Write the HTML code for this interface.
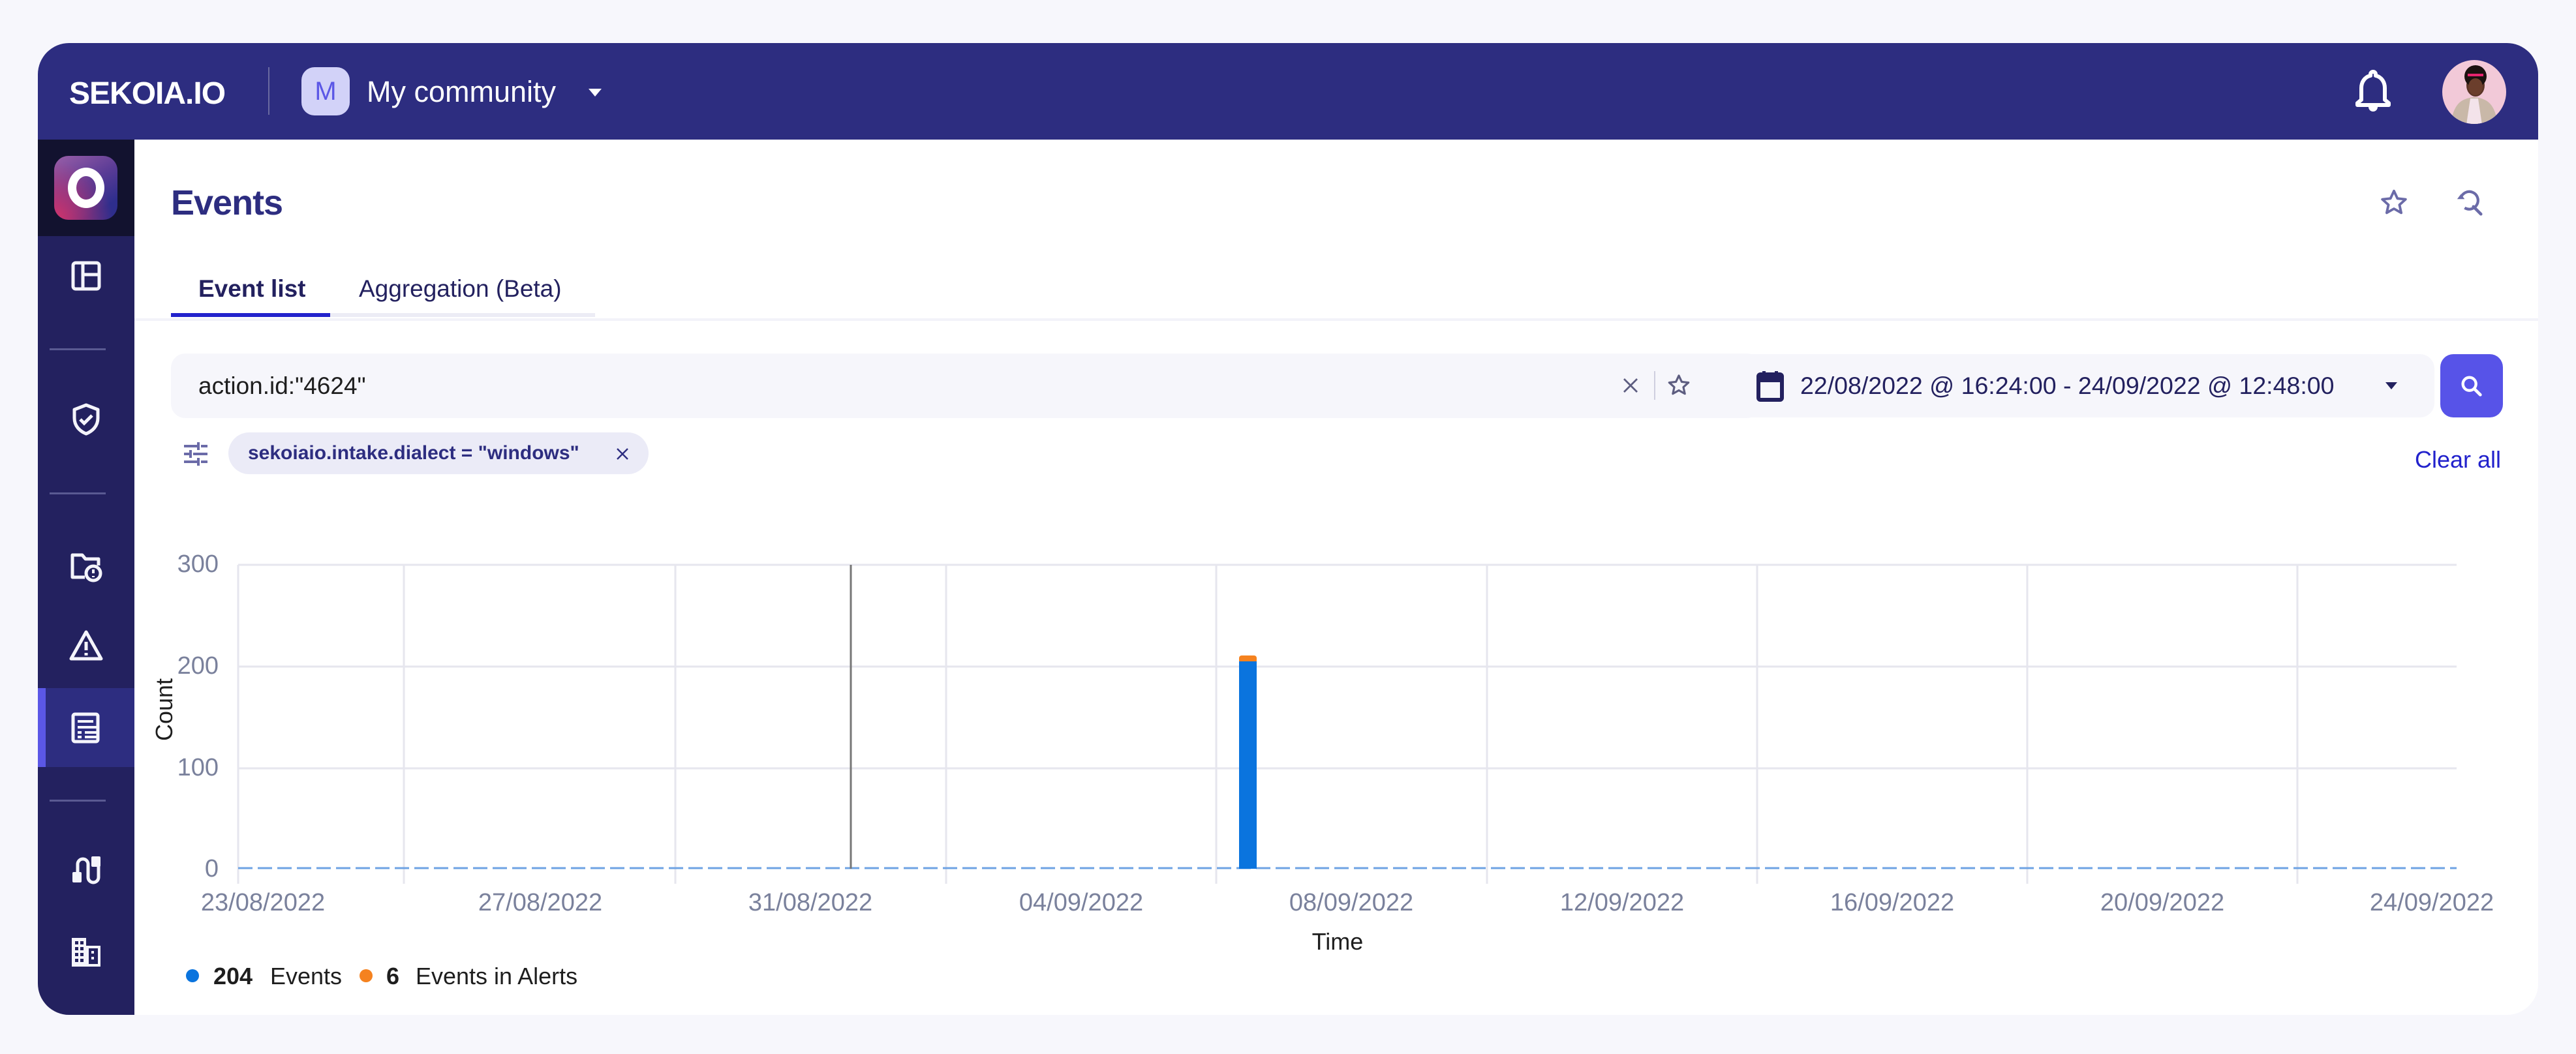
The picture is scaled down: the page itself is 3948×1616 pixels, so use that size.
<!DOCTYPE html>
<html><head><meta charset="utf-8"><style>
*{margin:0;padding:0;box-sizing:border-box}
body{width:3948px;height:1616px;background:#f7f7fc;font-family:"Liberation Sans",sans-serif;position:relative;overflow:hidden}
.a{position:absolute}
.frame{left:58px;top:66px;width:3832px;height:1490px;border-radius:48px;overflow:hidden;background:#fff}
.hdr{left:0;top:0;width:3832px;height:148px;background:#2d2d80}
.side{left:0;top:148px;width:148px;height:1342px;background:#23215f}
.sep{left:18px;width:86px;height:3px;background:#5a5a92}
.ic{left:48px;width:52px;height:52px}
</style></head><body>
<div class="a frame">
 <div class="a hdr">
  <div class="a" style="left:48px;top:50px;font-size:48px;font-weight:bold;color:#fff;letter-spacing:-1px">SEKOIA.IO</div>
  <div class="a" style="left:353px;top:37px;width:2px;height:73px;background:#6a6aa0"></div>
  <div class="a" style="left:404px;top:37px;width:74px;height:74px;border-radius:20px;background:#d2d2f8;color:#5b57e6;font-size:40px;text-align:center;line-height:74px">M</div>
  <div class="a" style="left:504px;top:49px;font-size:45px;color:#fff">My community</div>
  <svg class="a" style="left:842px;top:68px" width="24" height="16"><path d="M2 2h20L12 14z" fill="#fff"/></svg>
  <svg class="a" style="left:3550px;top:40px" width="58" height="66" viewBox="0 0 58 66"><path d="M29 4a4 4 0 014 4v2c9 2 14 10 14 19v18l6 5v3H5v-3l6-5V29c0-9 5-17 14-19V8a4 4 0 014-4z" fill="none" stroke="#fff" stroke-width="6" stroke-linejoin="round"/><path d="M22 58h14a7 7 0 01-14 0z" fill="#fff"/></svg>
  <svg class="a" style="left:3684px;top:25px" width="100" height="100" viewBox="0 0 100 100"><defs><clipPath id="c"><circle cx="50" cy="50" r="49"/></clipPath></defs><circle cx="50" cy="50" r="49" fill="#f2c9d8"/><g clip-path="url(#c)"><path d="M14 100c4-30 14-40 36-42 22 2 32 12 36 42z" fill="#c9b8a8"/><path d="M38 100l6-40h12l6 40z" fill="#f3e3ea"/><ellipse cx="52" cy="40" rx="14" ry="17" fill="#5a3426"/><circle cx="52" cy="26" r="17" fill="#1b1210"/><ellipse cx="52" cy="42" rx="11" ry="13" fill="#6b3e2c"/><path d="M40 24h24" stroke="#e5246e" stroke-width="4"/></g></svg>
 </div>
 <div class="a side">
  <div class="a" style="left:0;top:0;width:148px;height:148px;background:#12122f"></div>
  <div class="a" style="left:25px;top:25px;width:97px;height:98px;border-radius:22px;background:linear-gradient(150deg,#9b5fa8 0%,#5b3c96 45%,#2e2e8c 80%);overflow:hidden">
   <div class="a" style="left:0;top:0;width:97px;height:98px;background:radial-gradient(circle at 0% 100%,#d6336a 0%,rgba(214,51,106,0.5) 35%,rgba(214,51,106,0) 65%)"></div>
   <div class="a" style="left:21px;top:18px;width:56px;height:62px;border:13px solid #fff;border-radius:50%"></div>
  </div>
  <svg class="a ic" style="top:183px" viewBox="0 0 52 52"><rect x="6" y="6" width="40" height="40" rx="4" fill="none" stroke="#f4f4fb" stroke-width="5"/><path d="M21 6v40M21 24h25" stroke="#f4f4fb" stroke-width="5"/></svg>
  <div class="a sep" style="top:320px"></div>
  <svg class="a ic" style="top:403px" viewBox="0 0 52 52"><path d="M26 4l18 7v13c0 12-8 20-18 24C16 44 8 36 8 24V11z" fill="none" stroke="#f4f4fb" stroke-width="5" stroke-linejoin="round"/><path d="M17 26l6 6 12-12" fill="none" stroke="#f4f4fb" stroke-width="5"/></svg>
  <div class="a sep" style="top:541px"></div>
  <svg class="a ic" style="top:629px" viewBox="0 0 52 52"><path d="M24 42H5V8h15l5 6h20v10" fill="none" stroke="#f4f4fb" stroke-width="5" stroke-linejoin="round"/><circle cx="37" cy="36" r="11" fill="none" stroke="#f4f4fb" stroke-width="5"/><path d="M37 30v6M37 40v2" stroke="#f4f4fb" stroke-width="4"/></svg>
  <svg class="a ic" style="top:750px" viewBox="0 0 52 52"><path d="M26 5L3 46h46z" fill="none" stroke="#f4f4fb" stroke-width="5" stroke-linejoin="round"/><path d="M26 20v13M26 37v4" stroke="#f4f4fb" stroke-width="5"/></svg>
  <div class="a" style="left:0;top:841px;width:148px;height:121px;background:#2d2d80"></div>
  <div class="a" style="left:0;top:841px;width:12px;height:121px;background:#5b57e6"></div>
  <svg class="a ic" style="top:876px" viewBox="0 0 52 52"><rect x="6" y="5" width="38" height="42" rx="3" fill="none" stroke="#f4f4fb" stroke-width="5"/><path d="M13 16h24M13 25h32M13 33h6M24 33h22M13 40h6M24 40h22" stroke="#f4f4fb" stroke-width="4"/></svg>
  <div class="a sep" style="top:1012px"></div>
  <svg class="a ic" style="top:1095px" viewBox="0 0 52 52"><path d="M13 36V16a8 8 0 0116 0v20a8 8 0 0016 0V18" fill="none" stroke="#f4f4fb" stroke-width="5"/><rect x="5" y="28" width="14" height="16" rx="2" fill="#f4f4fb"/><rect x="34" y="4" width="14" height="16" rx="2" fill="#f4f4fb"/></svg>
  <svg class="a ic" style="top:1220px" viewBox="0 0 52 52"><path d="M4 4h22v12h22v32H4z" fill="#f4f4fb"/><g fill="#23215f"><rect x="9" y="9" width="5" height="5"/><rect x="17" y="9" width="5" height="5"/><rect x="9" y="18" width="5" height="5"/><rect x="17" y="18" width="5" height="5"/><rect x="9" y="27" width="5" height="5"/><rect x="17" y="27" width="5" height="5"/><rect x="9" y="36" width="5" height="5"/><rect x="17" y="36" width="5" height="5"/><rect x="30" y="20" width="14" height="24"/></g><rect x="34" y="24" width="4" height="4" fill="#f4f4fb"/><rect x="34" y="33" width="4" height="4" fill="#f4f4fb"/></svg>
 </div>
 <!-- content -->
 <div class="a" style="left:204px;top:214px;font-size:54px;font-weight:bold;color:#2d2d80;letter-spacing:-1px">Events</div>
 <svg class="a" style="left:3588px;top:222px" width="46" height="46" viewBox="0 0 24 24"><path d="M12 2.5l2.8 6 6.5.7-4.9 4.4 1.4 6.4L12 16.7 6.2 20l1.4-6.4L2.7 9.2l6.5-.7z" fill="none" stroke="#6b6ba8" stroke-width="2" stroke-linejoin="round"/></svg>
 <svg class="a" style="left:3704px;top:222px" width="46" height="46" viewBox="0 0 24 24"><path d="M5 8a7 7 0 113 8" fill="none" stroke="#6b6ba8" stroke-width="2.2"/><path d="M2 9l3-4 3 4z" fill="#6b6ba8"/><path d="M15 15l6 6" stroke="#6b6ba8" stroke-width="2.4" stroke-linecap="round"/></svg>
 <div class="a" style="left:246px;top:356px;font-size:37px;font-weight:bold;color:#23215f">Event list</div>
 <div class="a" style="left:492px;top:356px;font-size:37px;color:#23215f">Aggregation (Beta)</div>
 <div class="a" style="left:204px;top:414px;width:650px;height:6px;background:#ececf5"></div>
 <div class="a" style="left:204px;top:414px;width:244px;height:6px;background:#2222cc"></div>
 <div class="a" style="left:148px;top:422px;width:3684px;height:4px;background:#f3f3f9"></div>
 <div class="a" style="left:204px;top:476px;width:2437px;height:99px;border-radius:22px;background:#f6f6fb"></div>
 <div class="a" style="left:246px;top:505px;font-size:37px;color:#1e1e1e">action.id:"4624"</div>
 <svg class="a" style="left:2426px;top:510px" width="30" height="30" viewBox="0 0 24 24"><path d="M4 4l16 16M20 4L4 20" stroke="#5d5d80" stroke-width="2.2"/></svg>
 <div class="a" style="left:2477px;top:503px;width:2px;height:44px;background:#cfcfdf"></div>
 <svg class="a" style="left:2496px;top:506px" width="38" height="38" viewBox="0 0 24 24"><path d="M12 2.5l2.8 6 6.5.7-4.9 4.4 1.4 6.4L12 16.7 6.2 20l1.4-6.4L2.7 9.2l6.5-.7z" fill="none" stroke="#5d5d80" stroke-width="2" stroke-linejoin="round"/></svg>
 <div class="a" style="left:2595px;top:477px;width:1078px;height:97px;border-radius:22px;background:#f6f6fb"></div>
 <svg class="a" style="left:2634px;top:502px" width="42" height="48" viewBox="0 0 42 48"><rect x="3" y="6" width="36" height="39" rx="3" fill="none" stroke="#23215f" stroke-width="6"/><rect x="3" y="6" width="36" height="12" fill="#23215f"/><rect x="9" y="1" width="5" height="8" fill="#23215f"/><rect x="28" y="1" width="5" height="8" fill="#23215f"/></svg>
 <div class="a" style="left:2701px;top:504px;font-size:37.5px;color:#23215f">22/08/2022 @ 16:24:00 - 24/09/2022 @ 12:48:00</div>
 <svg class="a" style="left:3596px;top:518px" width="22" height="16"><path d="M2 2h18L11 13z" fill="#23215f"/></svg>
 <div class="a" style="left:3682px;top:477px;width:96px;height:97px;border-radius:20px;background:#5753e8"></div>
 <svg class="a" style="left:3710px;top:506px" width="40" height="40" viewBox="0 0 24 24"><circle cx="10" cy="10" r="6" fill="none" stroke="#fff" stroke-width="2.6"/><path d="M14.5 14.5l5.5 5.5" stroke="#fff" stroke-width="2.8" stroke-linecap="round"/></svg>
 <svg class="a" style="left:222px;top:610px" width="40" height="40" viewBox="0 0 40 40"><g stroke="#6b6ba8" stroke-width="4"><path d="M2 8h20M28 8h10M24 2v12M2 20h8M16 20h22M12 14v12M2 32h20M28 32h10M24 26v12"/></g></svg>
 <div class="a" style="left:292px;top:597px;width:644px;height:64px;border-radius:32px;background:#ebebf7"></div>
 <div class="a" style="left:322px;top:612px;font-size:30px;font-weight:bold;color:#2d2d80">sekoiaio.intake.dialect = "windows"</div>
 <svg class="a" style="left:884px;top:618px" width="24" height="24" viewBox="0 0 24 24"><path d="M4 4l16 16M20 4L4 20" stroke="#2d2d80" stroke-width="2.4"/></svg>
 <div class="a" style="right:57px;top:618px;font-size:36px;color:#2222cc">Clear all</div>
</div>
<svg class="a" style="left:0;top:0" width="3948" height="1616" font-family="Liberation Sans, sans-serif">
 <g stroke="#e6e6ee" stroke-width="3">
  <path d="M365 866H3765M365 1022H3765M365 1178H3765"/>
  <path d="M365 866V1355M619 866V1355M1035 866V1355M1450 866V1355M1864 866V1355M2279 866V1355M2693 866V1355M3107 866V1355M3521 866V1355"/>
 </g>
 <path d="M365 1331H3765" stroke="#6ea3e3" stroke-width="3" stroke-dasharray="22 8"/>
 <path d="M1304 866V1332" stroke="#777" stroke-width="3"/>
 <rect x="1899" y="1005" width="27" height="12" rx="4" fill="#f5821f"/>
 <rect x="1899" y="1014" width="27" height="318" fill="#0a74de"/>
 <g fill="#7a819c" font-size="38" text-anchor="end">
  <text x="335" y="877">300</text><text x="335" y="1033">200</text><text x="335" y="1189">100</text><text x="335" y="1344">0</text>
 </g>
 <g fill="#7a819c" font-size="38" text-anchor="middle">
  <text x="403" y="1396">23/08/2022</text><text x="828" y="1396">27/08/2022</text><text x="1242" y="1396">31/08/2022</text><text x="1657" y="1396">04/09/2022</text><text x="2071" y="1396">08/09/2022</text><text x="2486" y="1396">12/09/2022</text><text x="2900" y="1396">16/09/2022</text><text x="3314" y="1396">20/09/2022</text><text x="3727" y="1396">24/09/2022</text>
 </g>
 <text x="0" y="0" transform="translate(264 1088) rotate(-90)" text-anchor="middle" font-size="36" fill="#1e1e1e">Count</text>
 <text x="2050" y="1456" text-anchor="middle" font-size="36" fill="#1e1e1e">Time</text>
 <circle cx="295" cy="1496" r="10" fill="#0a74de"/>
 <text x="327" y="1509" font-size="36" font-weight="bold" fill="#1e1e1e">204</text>
 <text x="414" y="1509" font-size="36" fill="#1e1e1e">Events</text>
 <circle cx="561" cy="1496" r="10" fill="#f5821f"/>
 <text x="592" y="1509" font-size="36" font-weight="bold" fill="#1e1e1e">6</text>
 <text x="637" y="1509" font-size="36" fill="#1e1e1e">Events in Alerts</text>
</svg>
</body></html>
